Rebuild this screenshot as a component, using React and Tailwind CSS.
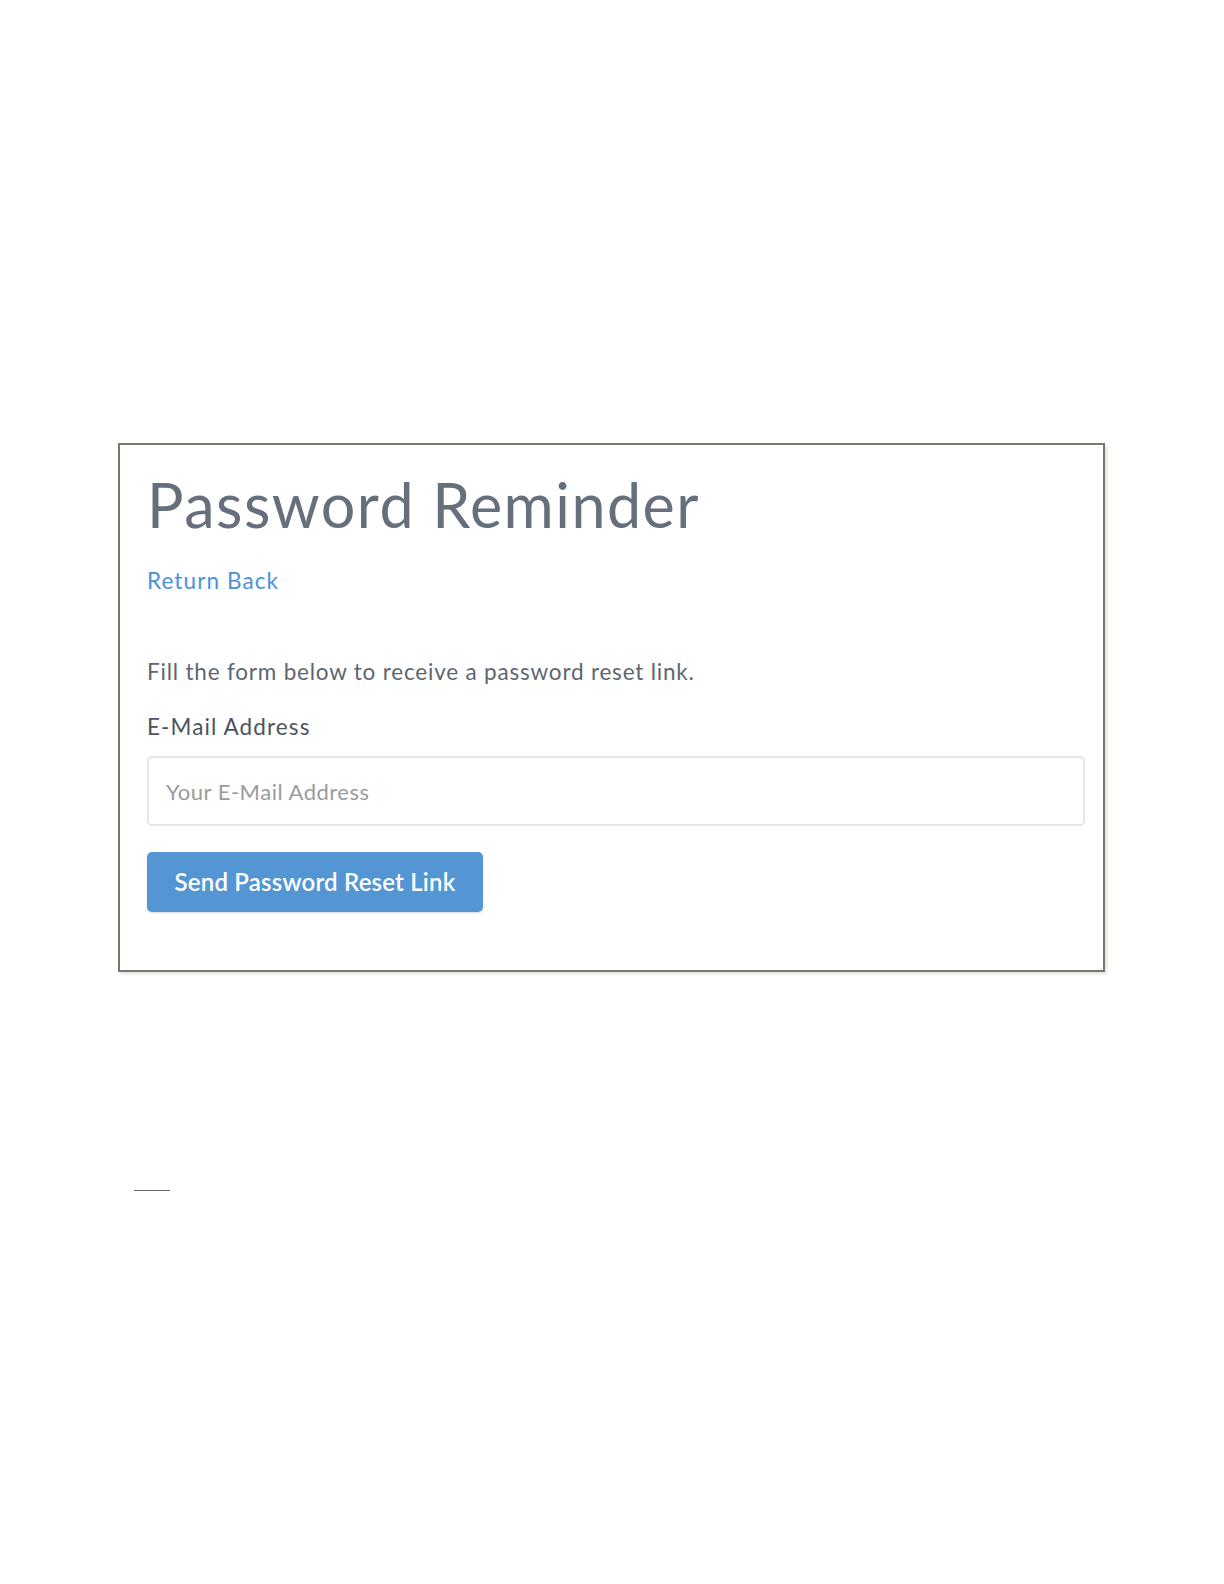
import React, { useState } from 'react';

const PasswordReminder = () => {
    const [email, setEmail] = useState('');

    return (
        <div className="min-h-[1584px] bg-white pt-[443px] font-['Lato','Liberation_Sans',sans-serif]">
            <div className="ml-[118px] w-[987px] h-[529px] border-2 border-[#7a776b] shadow-[2px_2px_3px_rgba(0,0,0,0.12)] px-[27px] pt-[29px]">
                <h1 className="text-[61px] leading-[61px] tracking-[1.5px] text-[#65707c]">Password Reminder</h1>
                <a href="#" className="block mt-[33px] text-[22.5px] leading-[26px] tracking-[1.1px] text-[#4a92d8]">Return Back</a>

                <p className="mt-[65px] text-[22.5px] leading-[26px] tracking-[0.8px] text-[#5d6670]">Fill the form below to receive a password reset link.</p>

                <form onSubmit={(e) => e.preventDefault()}>
                    <label htmlFor="email" className="block mt-[29px] text-[22.5px] leading-[26px] tracking-[1.1px] text-[#4b5360]">E-Mail Address</label>
                    <input
                        id="email"
                        type="email"
                        value={email}
                        onChange={(e) => setEmail(e.target.value)}
                        placeholder="Your E-Mail Address"
                        className="block mt-[16px] w-[938px] h-[70px] px-[17px] border-2 border-[#e6e6e6] rounded-[5px] text-[22px] tracking-[0.5px] text-[#555] placeholder:text-[#9b9b9b] outline-none"
                    />
                    <button type="submit" className="mt-[26px] w-[336px] h-[60px] rounded-[5px] bg-[#5496d3] text-white text-[24px] font-semibold tracking-[0.2px] shadow-[0_1px_2px_rgba(0,0,0,0.15)]">
                        Send Password Reset Link
                    </button>
                </form>
            </div>

            <div className="ml-[134px] mt-[218px] w-[36px] h-px bg-[#666]" />
        </div>
    );
};

export default PasswordReminder;
